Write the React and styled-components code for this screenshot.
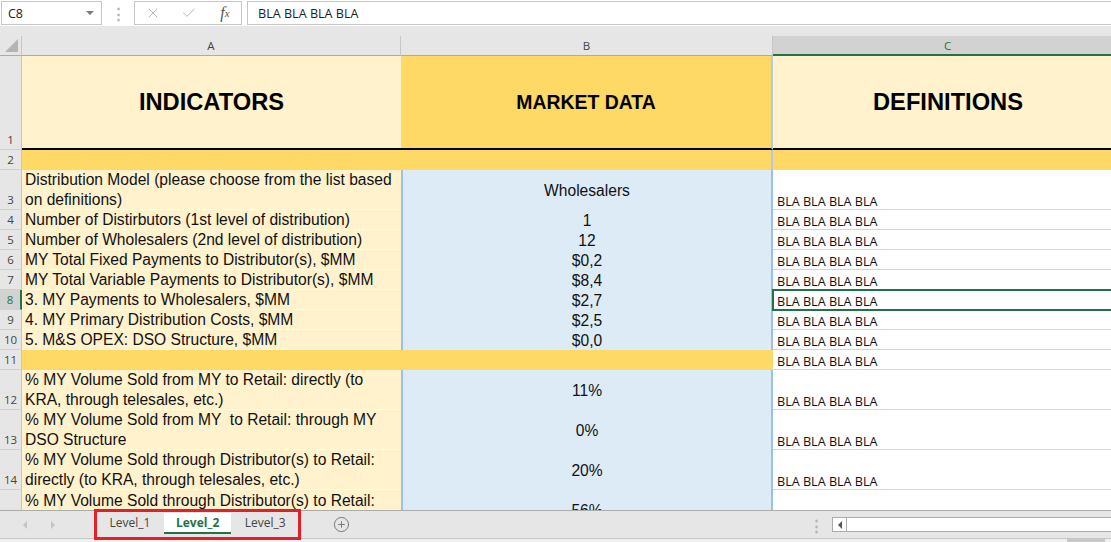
import styled, { createGlobalStyle } from 'styled-components';
import { X, Check, CirclePlus } from 'lucide-react';

const GlobalStyle = createGlobalStyle`
  * { box-sizing: border-box; }
  html, body { margin: 0; padding: 0; background: #e6e6e6; }
  body { font-family: 'Open Sans', 'Noto Sans', sans-serif; }
  #root { width: 1111px; height: 542px; overflow: hidden; }
`;

const GREEN = '#217346';
const LIGHT = '#fff2cc';
const GOLD = '#ffd966';
const BLUE = '#ddebf7';
const BLUE_LINE = '#9bc2e6';

const rows = [
  { n: 1, h: 94, kind: 'title' },
  { n: 2, h: 20, kind: 'band' },
  { n: 3, h: 40, a: ['Distribution Model (please choose from the list based', 'on definitions)'], b: 'Wholesalers', c: true },
  { n: 4, h: 20, a: ['Number of Distirbutors (1st level of distribution)'], b: '1', c: true },
  { n: 5, h: 20, a: ['Number of Wholesalers (2nd level of distribution)'], b: '12', c: true },
  { n: 6, h: 20, a: ['MY Total Fixed Payments to Distributor(s), $MM'], b: '$0,2', c: true },
  { n: 7, h: 20, a: ['MY Total Variable Payments to Distributor(s), $MM'], b: '$8,4', c: true },
  { n: 8, h: 20, a: ['3. MY Payments to Wholesalers, $MM'], b: '$2,7', c: true, selected: true },
  { n: 9, h: 20, a: ['4. MY Primary Distribution Costs, $MM'], b: '$2,5', c: true },
  { n: 10, h: 20, a: ['5. M&S OPEX: DSO Structure, $MM'], b: '$0,0', c: true },
  { n: 11, h: 20, kind: 'gap', c: true },
  { n: 12, h: 40, a: ['% MY Volume Sold from MY to Retail: directly (to', 'KRA, through telesales, etc.)'], b: '11%', c: true },
  { n: 13, h: 40, a: ['% MY Volume Sold from MY  to Retail: through MY', 'DSO Structure'], b: '0%', c: true },
  { n: 14, h: 40, a: ['% MY Volume Sold through Distributor(s) to Retail:', 'directly (to KRA, through telesales, etc.)'], b: '20%', c: true },
  { n: 15, h: 40, a: ['% MY Volume Sold through Distributor(s) to Retail:', ''], b: '56%', c: false },
];

function App() {
  return (
    <Window>
      <GlobalStyle />
      <FormulaBar>
        <NameBox>
          <span>C8</span>
          <DropArrow />
        </NameBox>
        <Grip>⋮</Grip>
        <FnBox>
          <FnIcon><X size={16} strokeWidth={1.4} /></FnIcon>
          <FnIcon><Check size={16} strokeWidth={1.4} /></FnIcon>
          <FnIcon $text>f<sub>x</sub></FnIcon>
        </FnBox>
        <InputBox>BLA BLA BLA BLA</InputBox>
      </FormulaBar>
      <Gap />
      <Sheet>
        <HeaderRow>
          <Corner />
          <ColHead>A</ColHead>
          <ColHead>B</ColHead>
          <ColHead $active>C</ColHead>
        </HeaderRow>
        {rows.map(r => (
          <SheetRow key={r.n} $h={r.h}>
            <RowHead $active={r.selected}>{r.n}</RowHead>
            {r.kind === 'title' ? (
              <>
                <TitleCell $bg={LIGHT}>INDICATORS</TitleCell>
                <TitleCell $bg={GOLD} $small $edge>MARKET DATA</TitleCell>
                <TitleCell $bg={LIGHT}>DEFINITIONS</TitleCell>
              </>
            ) : r.kind === 'band' ? (
              <>
                <ACell $bg={GOLD} />
                <BCell $bg={GOLD} $edge />
                <CCell $bg={GOLD} $plain />
              </>
            ) : r.kind === 'gap' ? (
              <>
                <ACell $bg={GOLD} />
                <BCell $bg={GOLD} />
                <CCell>BLA BLA BLA BLA</CCell>
              </>
            ) : (
              <>
                <ACell $bg={LIGHT} $lined>
                  {r.a.map((line, i) => <Line key={i}>{line}</Line>)}
                </ACell>
                <BCell $bg={BLUE} $blue>{r.b}</BCell>
                <CCell $selected={r.selected}>{r.c ? 'BLA BLA BLA BLA' : ''}</CCell>
              </>
            )}
          </SheetRow>
        ))}
      </Sheet>
      <TabBar>
        <Nav>
          <NavArrow $dir="left" />
          <NavArrow $dir="right" />
        </Nav>
        <TabGroup>
          <Tab>Level_1</Tab>
          <Tab $active>Level_2</Tab>
          <Tab>Level_3</Tab>
        </TabGroup>
        <AddSheet><CirclePlus size={17} strokeWidth={1.4} /></AddSheet>
        <RightTools>
          <Grip $small>⋮</Grip>
          <HScroll>
            <ScrollBtn><NavArrow $dir="left" $dark /></ScrollBtn>
          </HScroll>
        </RightTools>
      </TabBar>
      <BottomStrip>
        <Thumb />
      </BottomStrip>
    </Window>
  );
}

export default App;

const Window = styled.div`
  width: 1111px;
  height: 542px;
  display: flex;
  flex-direction: column;
  background: #e6e6e6;
  overflow: hidden;
`;

const FormulaBar = styled.div`
  height: 26px;
  flex: none;
  display: flex;
  align-items: flex-start;
  padding-top: 1px;
  background: #fff;
`;

const NameBox = styled.div`
  width: 101px;
  height: 24px;
  margin-left: 1px;
  border: 1px solid #c6c6c6;
  background: #fff;
  display: flex;
  align-items: center;
  justify-content: space-between;
  padding: 0 7px 0 6px;
  font-size: 12.5px;
  color: #222;
`;

const DropArrow = styled.span`
  width: 0;
  height: 0;
  border-left: 4px solid transparent;
  border-right: 4px solid transparent;
  border-top: 4px solid #7a7a7a;
`;

const Grip = styled.div`
  width: ${p => (p.$small ? '16px' : '32px')};
  height: ${p => (p.$small ? '27px' : '24px')};
  display: flex;
  align-items: center;
  justify-content: center;
  color: #b4b4b4;
  font-size: 15px;
  font-weight: 700;
`;

const FnBox = styled.div`
  width: 108px;
  height: 24px;
  border: 1px solid #c6c6c6;
  background: #fff;
  display: grid;
  grid-template-columns: 36px 36px 36px;
`;

const FnIcon = styled.div`
  display: flex;
  align-items: center;
  justify-content: center;
  color: ${p => (p.$text ? '#555' : '#b0b0b0')};
  font-family: 'Liberation Serif', serif;
  font-style: italic;
  font-size: 16px;
  & sub {
    font-size: 11px;
    vertical-align: -1px;
  }
`;

const InputBox = styled.div`
  flex: 1;
  height: 24px;
  margin-left: 5px;
  border: 1px solid #c6c6c6;
  border-right: none;
  background: #fff;
  padding-left: 10px;
  display: flex;
  align-items: center;
  font-size: 12.6px;
  color: #222;
`;

const Gap = styled.div`
  height: 10px;
  flex: none;
  background: #e6e6e6;
`;

const Sheet = styled.div`
  height: 474px;
  flex: none;
  overflow: hidden;
  background: #fff;
`;

const gridCols = '22px 379px 372px 350px';

const HeaderRow = styled.div`
  display: grid;
  grid-template-columns: ${gridCols};
  grid-template-rows: 20px;
  height: 20px;
  background: #e6e6e6;
`;

const Corner = styled.div`
  position: relative;
  border-right: 1px solid #c6c6c6;
  border-bottom: 1px solid #ababab;
  &::after {
    content: '';
    position: absolute;
    right: 3px;
    bottom: 3px;
    width: 0;
    height: 0;
    border-left: 13px solid transparent;
    border-bottom: 13px solid #b4b4b4;
  }
`;

const ColHead = styled.div`
  display: flex;
  align-items: center;
  justify-content: center;
  font-size: 11.5px;
  color: ${p => (p.$active ? GREEN : '#444')};
  background: ${p => (p.$active ? '#d2d2d2' : '#e6e6e6')};
  border-right: 1px solid #c6c6c6;
  border-bottom: ${p => (p.$active ? `2px solid ${GREEN}` : '1px solid #ababab')};
`;

const SheetRow = styled.div`
  display: grid;
  grid-template-columns: ${gridCols};
  grid-template-rows: ${p => p.$h}px;
  height: ${p => p.$h}px;
`;

const RowHead = styled.div`
  display: flex;
  align-items: flex-end;
  justify-content: center;
  padding-bottom: 1px;
  font-size: 11.5px;
  line-height: 16px;
  color: ${p => (p.$active ? GREEN : '#444')};
  background: ${p => (p.$active ? '#d2d2d2' : '#e6e6e6')};
  border-right: ${p => (p.$active ? `2px solid ${GREEN}` : '1px solid #c6c6c6')};
  border-bottom: 1px solid #d0d0d0;
`;

const arial = `'Liberation Sans', Arial, sans-serif`;

const TitleCell = styled.div`
  display: flex;
  align-items: center;
  justify-content: center;
  background: ${p => p.$bg};
  border-bottom: 2px solid #000;
  border-right: ${p => (p.$edge ? '2px solid #b3c9dd' : 'none')};
  font-family: ${arial};
  font-weight: 700;
  font-size: ${p => (p.$small ? '19.4px' : '23.7px')};
  color: #000;
`;

const ACell = styled.div`
  display: flex;
  flex-direction: column;
  justify-content: flex-end;
  padding-left: 3px;
  background: ${p => p.$bg};
  border-bottom: ${p => (p.$lined ? '1px solid #fffaf0' : 'none')};
  font-family: ${arial};
  font-size: 15.6px;
  color: #111;
  overflow: hidden;
`;

const Line = styled.div`
  height: 20px;
  line-height: 22px;
  white-space: pre;
`;

const BCell = styled.div`
  display: flex;
  align-items: center;
  justify-content: center;
  padding-top: 2px;
  line-height: 18px;
  overflow: hidden;
  background: ${p => p.$bg};
  border-left: ${p => (p.$blue ? `2px solid ${BLUE_LINE}` : 'none')};
  border-right: ${p => (p.$blue ? `2px solid ${BLUE_LINE}` : p.$edge ? '2px solid #b3c9dd' : 'none')};
  font-family: ${arial};
  font-size: 15.6px;
  color: #111;
`;

const CCell = styled.div`
  position: relative;
  display: flex;
  align-items: flex-end;
  padding: 0 0 0 4px;
  background: ${p => p.$bg || '#fff'};
  border-bottom: ${p => (p.$plain ? 'none' : '1px solid #d4d4d4')};
  outline: ${p => (p.$selected ? `2px solid ${GREEN}` : 'none')};
  outline-offset: -1px;
  z-index: ${p => (p.$selected ? 2 : 0)};
  font-size: 12.6px;
  line-height: 14px;
  color: #111;
  white-space: nowrap;
`;

const TabBar = styled.div`
  position: relative;
  height: 29px;
  flex: none;
  display: flex;
  align-items: flex-start;
  background: #e6e6e6;
  border-top: 1px solid #ababab;
  border-bottom: 1px solid #c6c6c6;
`;

const Nav = styled.div`
  width: 94px;
  height: 27px;
  display: flex;
  align-items: center;
  gap: 24px;
  padding-left: 23px;
`;

const NavArrow = styled.span`
  width: 0;
  height: 0;
  border-top: 4px solid transparent;
  border-bottom: 4px solid transparent;
  ${p => (p.$dir === 'left'
    ? `border-right: 4px solid ${p.$dark ? '#555' : '#c4c4c4'};`
    : `border-left: 4px solid ${p.$dark ? '#555' : '#c4c4c4'};`)}
`;

const TabGroup = styled.div`
  position: relative;
  z-index: 3;
  margin-top: -2px;
  height: 31px;
  display: flex;
  align-items: flex-start;
  gap: 1px;
  padding-top: 1px;
  border: 3px solid #e3202a;
`;

const Tab = styled.div`
  height: 21px;
  padding: 0 12px;
  min-width: 66px;
  display: flex;
  align-items: center;
  justify-content: center;
  font-size: 12px;
  font-weight: ${p => (p.$active ? 700 : 400)};
  color: ${p => (p.$active ? GREEN : '#444')};
  background: ${p => (p.$active ? '#fff' : 'transparent')};
  border-bottom: 2px solid ${p => (p.$active ? GREEN : 'transparent')};
`;

const AddSheet = styled.div`
  margin-left: 32px;
  height: 27px;
  display: flex;
  align-items: center;
  color: #777;
`;

const RightTools = styled.div`
  margin-left: auto;
  display: flex;
  align-items: flex-start;
`;

const HScroll = styled.div`
  width: 279px;
  height: 15px;
  margin-top: 6px;
  margin-left: 8px;
  background: #fff;
  border: 1px solid #ababab;
  border-right: none;
  display: flex;
`;

const ScrollBtn = styled.div`
  width: 14px;
  height: 100%;
  border-right: 1px solid #ababab;
  display: flex;
  align-items: center;
  justify-content: center;
`;

const BottomStrip = styled.div`
  height: 3px;
  flex: none;
  display: flex;
  justify-content: flex-end;
  padding-right: 6px;
  background: #f0f0f0;
`;

const Thumb = styled.div`
  width: 38px;
  height: 3px;
  background: #c8c8c8;
`;
